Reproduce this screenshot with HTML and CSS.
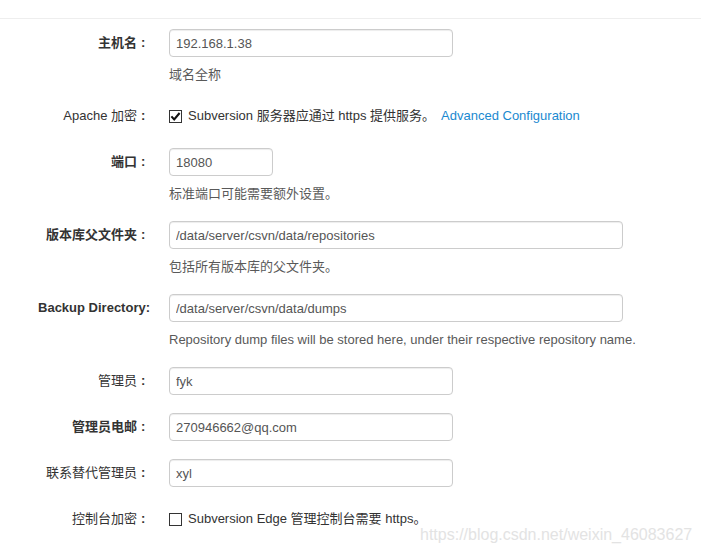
FILE: index.html
```html
<!DOCTYPE html>
<html lang="zh-CN">
<head>
<meta charset="utf-8">
<title>Subversion Edge 配置</title>
<link rel="stylesheet" href="styles.css">
</head>
<body>
<div class="topbar"></div>
<form class="form">
  <div class="group">
    <label class="label strong">主机名<span class="colon">:</span></label>
    <div class="controls">
      <input class="field w-md" type="text" value="192.168.1.38">
      <p class="help">域名全称</p>
    </div>
  </div>
  <div class="group">
    <label class="label">Apache 加密<span class="colon">:</span></label>
    <div class="controls check-row">
      <span class="box"><svg viewBox="0 0 13 13" width="13" height="13"><path d="M2.4 6.4 L5.2 9.4 L10.6 3" fill="none" stroke="#111" stroke-width="2.1"/></svg></span>
      <span class="check-text">Subversion 服务器应通过 https 提供服务。</span>
      <a class="link" href="#">Advanced Configuration</a>
    </div>
  </div>
  <div class="group">
    <label class="label strong">端口<span class="colon">:</span></label>
    <div class="controls">
      <input class="field w-sm" type="text" value="18080">
      <p class="help">标准端口可能需要额外设置。</p>
    </div>
  </div>
  <div class="group">
    <label class="label strong">版本库父文件夹<span class="colon">:</span></label>
    <div class="controls">
      <input class="field w-lg" type="text" value="/data/server/csvn/data/repositories">
      <p class="help">包括所有版本库的父文件夹。</p>
    </div>
  </div>
  <div class="group">
    <label class="label strong">Backup Directory:</label>
    <div class="controls">
      <input class="field w-lg" type="text" value="/data/server/csvn/data/dumps">
      <p class="help">Repository dump files will be stored here, under their respective repository name.</p>
    </div>
  </div>
  <div class="group">
    <label class="label">管理员<span class="colon">:</span></label>
    <div class="controls">
      <input class="field w-md" type="text" value="fyk">
    </div>
  </div>
  <div class="group">
    <label class="label strong">管理员电邮<span class="colon">:</span></label>
    <div class="controls">
      <input class="field w-md" type="text" value="270946662@qq.com">
    </div>
  </div>
  <div class="group">
    <label class="label">联系替代管理员<span class="colon">:</span></label>
    <div class="controls">
      <input class="field w-md" type="text" value="xyl">
    </div>
  </div>
  <div class="group">
    <label class="label">控制台加密<span class="colon">:</span></label>
    <div class="controls check-row">
      <span class="box"></span>
      <span class="check-text">Subversion Edge 管理控制台需要 https。</span>
    </div>
  </div>
</form>
<div class="watermark">https://blog.csdn.net/weixin_46083627</div>
</body>
</html>
```

FILE: styles.css
```css
html, body {
  margin: 0;
  padding: 0;
  background: #fff;
}
body {
  font-family: "Liberation Sans", Arial, "Noto Sans CJK SC", sans-serif;
  font-size: 13px;
  line-height: 18px;
  color: #333;
  position: relative;
  height: 554px;
  overflow: hidden;
}
.topbar {
  height: 18px;
  border-bottom: 1px solid #eee;
}
.form {
  padding-top: 10px;
}
.group {
  display: grid;
  grid-template-columns: 150px 1fr;
  column-gap: 19px;
  margin-bottom: 18px;
}
.label {
  text-align: right;
  padding-top: 5px;
  line-height: 18px;
  color: #333;
  white-space: nowrap;
}
.label.strong {
  font-weight: bold;
}
.colon {
  display: inline-block;
  width: 13px;
  padding-left: 4px;
  box-sizing: border-box;
  text-align: left;
  font-weight: bold;
}
.controls {
  min-width: 0;
}
.field {
  display: block;
  box-sizing: border-box;
  height: 28px;
  padding: 4px 6px;
  border: 1px solid #ccc;
  border-radius: 4px;
  box-shadow: inset 0 1px 1px rgba(0,0,0,0.075);
  font-family: "Liberation Sans", Arial, "Noto Sans CJK SC", sans-serif;
  font-size: 13px;
  line-height: 18px;
  color: #555;
  background: #fff;
  margin: 0;
}
.w-sm { width: 104px; }
.w-md { width: 284px; }
.w-lg { width: 454px; }
.help {
  margin: 9px 0 0;
  color: #595959;
  line-height: 18px;
}
.check-row {
  display: flex;
  align-items: center;
  height: 28px;
}
.box {
  box-sizing: border-box;
  width: 13px;
  height: 13px;
  border: 1px solid #333;
  background: #fff;
  display: flex;
  align-items: center;
  justify-content: center;
  flex: none;
}
.box svg {
  display: block;
  margin: -1px;
}
.check-text {
  margin-left: 6px;
  color: #333;
}
.link {
  margin-left: 6px;
  color: #1a89d0;
  text-decoration: none;
}
.watermark {
  position: absolute;
  left: 420px;
  top: 526px;
  font-family: "Liberation Sans", Arial, sans-serif;
  font-size: 16px;
  line-height: 18px;
  color: #e3e3e3;
  white-space: nowrap;
}
```
